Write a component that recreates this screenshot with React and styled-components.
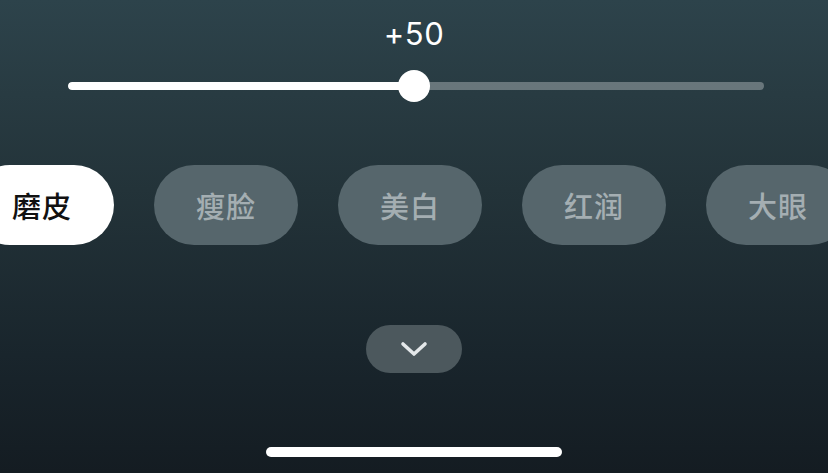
import React from "react";
import styled, { createGlobalStyle } from "styled-components";

const Global = createGlobalStyle`
  html, body { margin: 0; padding: 0; }
  body {
    width: 828px;
    height: 473px;
    overflow: hidden;
    background: #1c282f;
    font-family: Inter, "Noto Sans CJK SC", sans-serif;
  }
`;

const Screen = styled.div`
  width: 828px;
  height: 473px;
  box-sizing: border-box;
  overflow: hidden;
  display: flex;
  flex-direction: column;
  align-items: center;
  padding-top: 14px;
  background: linear-gradient(180deg, #2d434b 0%, #233339 40%, #19252c 75%, #141c22 100%);
`;

const Value = styled.div`
  height: 40px;
  line-height: 40px;
  font-size: 31px;
  font-family: Inter, "Liberation Sans", sans-serif;
  color: #ffffff;
  letter-spacing: 0.5px;
`;

const SliderWrap = styled.div`
  margin-top: 16px;
  margin-left: 4px;
  width: 696px;
  height: 32px;
  position: relative;
  display: flex;
  align-items: center;
`;

const Track = styled.div`
  width: 100%;
  height: 8px;
  border-radius: 4px;
  background: rgba(255, 255, 255, 0.3);
  overflow: hidden;
`;

const Fill = styled.div`
  height: 100%;
  background: #ffffff;
  border-radius: 4px;
`;

const Thumb = styled.div`
  position: absolute;
  top: 0;
  width: 32px;
  height: 32px;
  margin-left: -18px;
  border-radius: 50%;
  background: #ffffff;
`;

const PillRow = styled.div`
  margin-top: 63px;
  align-self: stretch;
  display: flex;
  gap: 40px;
  margin-left: -30px;
`;

const Pill = styled.div`
  flex: 0 0 144px;
  height: 80px;
  border-radius: 40px;
  display: flex;
  align-items: center;
  justify-content: center;
  font-family: "Noto Sans CJK SC", sans-serif;
  font-size: 29px;
  font-weight: 500;
  letter-spacing: 1px;
  background: ${(p) => (p.$active ? "#ffffff" : "#56666c")};
  color: ${(p) => (p.$active ? "#111111" : "#a4aeb2")};
`;

const Collapse = styled.div`
  margin-top: 80px;
  width: 96px;
  height: 48px;
  border-radius: 24px;
  background: #4c585d;
  display: flex;
  align-items: center;
  justify-content: center;
`;

const HomeBar = styled.div`
  margin-top: auto;
  margin-bottom: 16px;
  width: 296px;
  height: 10px;
  border-radius: 5px;
  background: #ffffff;
`;

const items = ["磨皮", "瘦脸", "美白", "红润", "大眼"];

export default function App() {
  const value = 50;
  return (
    <>
      <Global />
      <Screen>
        <Value>+{value}</Value>
        <SliderWrap>
          <Track>
            <Fill style={{ width: `${value}%` }} />
          </Track>
          <Thumb style={{ left: `${value}%` }} />
        </SliderWrap>
        <PillRow>
          {items.map((t, i) => (
            <Pill key={t} $active={i === 0}>
              {t}
            </Pill>
          ))}
        </PillRow>
        <Collapse>
          <svg width="28" height="18" viewBox="0 0 28 18">
            <path
              d="M3 4 L14 14 L25 4"
              fill="none"
              stroke="#e4e8ea"
              strokeWidth="3.6"
              strokeLinecap="round"
              strokeLinejoin="round"
            />
          </svg>
        </Collapse>
        <HomeBar />
      </Screen>
    </>
  );
}
